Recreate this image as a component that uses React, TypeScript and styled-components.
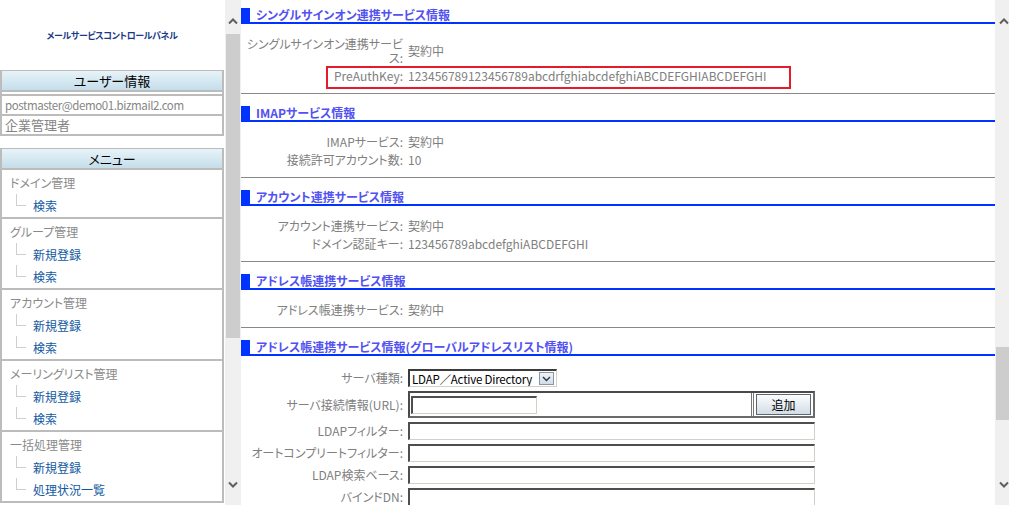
import styled, { createGlobalStyle } from 'styled-components';

const GlobalStyle = createGlobalStyle`
	html,
	body {
		margin: 0;
		padding: 0;
		background: #fff;
		overflow: hidden;
	}
	body {
		font-family: 'Noto Sans CJK JP', 'Noto Sans', sans-serif;
		font-size: 12px;
		font-feature-settings: 'palt';
		color: #808080;
	}
	* {
		box-sizing: border-box;
	}
`;

const Frames = styled.div`
	display: flex;
	width: 1012px;
	height: 505px;
`;

/* ---------- scrollbars ---------- */

const ScrollTrack = styled.div<{ $width: number }>`
	display: flex;
	flex-direction: column;
	flex-shrink: 0;
	width: ${({ $width }) => $width}px;
	height: 100%;
	background: #f0f0f0;
`;

const ScrollArrow = styled.div<{ $down?: boolean }>`
	display: flex;
	align-items: center;
	justify-content: center;
	height: 33px;
	padding: ${({ $down }) => ($down ? '0 0 9px' : '9px 0 0')};
	svg {
		display: block;
	}
`;

const ScrollThumb = styled.div<{ $top: number; $height: number }>`
	margin: ${({ $top }) => $top}px 1px 0;
	height: ${({ $height }) => $height}px;
	background: #cdcdcd;
`;

const ScrollRest = styled.div`
	flex: 1;
`;

const Chevron = ({ down }: { down?: boolean }) => (
	<svg width="10" height="7" viewBox="0 0 10 7">
		<polyline
			points={down ? '1,1.5 5,5.5 9,1.5' : '1,5.5 5,1.5 9,5.5'}
			fill="none"
			stroke="#5f5f5f"
			strokeWidth="2"
		/>
	</svg>
);

const Scrollbar = ({ width, top, height }: { width: number; top: number; height: number }) => (
	<ScrollTrack $width={width}>
		<ScrollArrow>
			<Chevron />
		</ScrollArrow>
		<ScrollThumb $top={top} $height={height} />
		<ScrollRest />
		<ScrollArrow $down>
			<Chevron down />
		</ScrollArrow>
	</ScrollTrack>
);

/* ---------- side frame ---------- */

const SideFrame = styled.div`
	display: flex;
	flex-shrink: 0;
	width: 241px;
`;

const SideContent = styled.div`
	width: 225px;
	padding-right: 1px;
`;

const Logo = styled.div`
	display: flex;
	align-items: center;
	justify-content: center;
	height: 70px;
	font-size: 9px;
	font-weight: 700;
	color: #1b3b85;
	letter-spacing: -0.4px;
`;

const SideBox = styled.div`
	border: 2px solid #bcbcbc;
	border-top-width: 1px;
	border-bottom: none;
	& + & {
		margin-top: 12px;
	}
`;

const BoxHeader = styled.div`
	height: 21px;
	line-height: 19px;
	text-align: center;
	font-size: 13px;
	color: #000;
	background: linear-gradient(#e8f3f8, #c4deea);
	border-bottom: 2px solid #bcbcbc;
`;

const UserRows = styled.div`
	margin-top: 2px;
	border-bottom: 2px solid #bcbcbc;
`;

const UserRow = styled.div<{ $large?: boolean }>`
	height: 20px;
	padding-left: 3px;
	border-top: 2px solid #bcbcbc;
	font-size: ${({ $large }) => ($large ? '13px' : '11.5px')};
	letter-spacing: ${({ $large }) => ($large ? '0' : '-0.4px')};
	line-height: 18px;
	color: #858585;
	white-space: nowrap;
`;

const MenuGroup = styled.div`
	padding: 2px 0 1px;
	border-bottom: 2px solid #bcbcbc;
`;

const MenuHeading = styled.div`
	height: 22px;
	padding-left: 8px;
	line-height: 22px;
	color: #8a8a8a;
`;

const MenuItem = styled.div`
	display: flex;
	align-items: center;
	height: 22px;
	padding-left: 14px;
	&::before {
		content: '';
		align-self: flex-start;
		width: 9px;
		height: 11px;
		margin-right: 7px;
		border-left: 1px solid #cfcfcf;
		border-bottom: 1px solid #cfcfcf;
	}
	a {
		color: #11599f;
		text-decoration: none;
	}
`;

/* ---------- main frame ---------- */

const Main = styled.main`
	flex: 1;
	min-width: 0;
	padding-top: 8px;
`;

const Section = styled.section<{ $first?: boolean }>`
	padding: ${({ $first }) => ($first ? '0' : '12px')} 0 8px;
	border-bottom: 1px solid #888;
`;

const SectionTitle = styled.h2`
	display: flex;
	height: 16px;
	margin: 0 0 11px;
	border-bottom: 2px solid #0033ff;
	font-size: 12px;
	font-weight: 700;
	line-height: 14px;
	color: #5252f2;
	white-space: nowrap;
	&::before {
		content: '';
		width: 9px;
		margin-right: 6px;
		background: #0033ff;
	}
`;

const Row = styled.div`
	position: relative;
	display: grid;
	grid-template-columns: 162px 1fr;
	column-gap: 5px;
	align-items: center;
	min-height: 18px;
	padding: 2px 0;
	line-height: 14px;
`;

const Label = styled.div`
	text-align: right;
`;

const Value = styled.div`
	white-space: nowrap;
`;

const Highlight = styled.div`
	position: absolute;
	left: 85px;
	top: -1px;
	width: 465px;
	height: 23px;
	border: 2px solid #e41b2b;
	pointer-events: none;
`;

const FormRow = styled(Row)`
	padding: 2px 0;
`;

const SelectBox = styled.div`
	display: flex;
	align-items: center;
	justify-content: space-between;
	width: 149px;
	height: 18px;
	padding: 0 2px;
	border-style: solid;
	border-width: 2px 1px 1px 2px;
	border-color: #3c3c3c #d4d0c8 #d4d0c8 #3c3c3c;
	font-size: 11.5px;
	letter-spacing: -0.2px;
	color: #000;
	white-space: nowrap;
	overflow: hidden;
	span.arrow {
		display: flex;
		flex-shrink: 0;
		align-items: center;
		justify-content: center;
		width: 15px;
		height: 13px;
		background: linear-gradient(#eef4f9, #cfdde9);
		border: 1px solid #8797a6;
	}
`;

const UrlGroup = styled.div`
	display: flex;
	width: 407px;
	height: 27px;
	border: 2px solid #4a4a4a;
	border-right-color: #6a6a6a;
	border-bottom-color: #6a6a6a;
`;

const UrlCell = styled.div`
	flex: 1;
	display: flex;
	align-items: center;
	padding-left: 1px;
`;

const ButtonCell = styled.div`
	display: flex;
	align-items: center;
	padding: 0 2px;
	border-left: 3px double #777;
`;

const Button = styled.button`
	width: 55px;
	height: 21px;
	padding: 0;
	border: 1px solid #5e6770;
	background: linear-gradient(#fbfdfe, #d2dde6);
	font-family: 'Noto Sans CJK JP', sans-serif;
	font-size: 12px;
	color: #000;
`;

const TextInput = styled.input<{ $width?: number }>`
	display: block;
	width: ${({ $width }) => $width ?? 407}px;
	height: 18px;
	margin: 0;
	padding: 0 2px;
	border-style: solid;
	border-width: 2px 1px 1px 2px;
	border-color: #4e4e4e #d4d0c8 #d4d0c8 #4e4e4e;
	background: #fff;
	outline: none;
`;

const menu = [
	{ title: 'ドメイン管理', items: ['検索'] },
	{ title: 'グループ管理', items: ['新規登録', '検索'] },
	{ title: 'アカウント管理', items: ['新規登録', '検索'] },
	{ title: 'メーリングリスト管理', items: ['新規登録', '検索'] },
	{ title: '一括処理管理', items: ['新規登録', '処理状況一覧'] },
];

const App = () => {
	return (
		<>
			<GlobalStyle />
			<Frames>
				<SideFrame>
					<SideContent>
						<Logo>メールサービスコントロールパネル</Logo>
						<SideBox>
							<BoxHeader>ユーザー情報</BoxHeader>
							<UserRows>
								<UserRow>postmaster@demo01.bizmail2.com</UserRow>
								<UserRow $large>企業管理者</UserRow>
							</UserRows>
						</SideBox>
						<SideBox>
							<BoxHeader>メニュー</BoxHeader>
							{menu.map((group) => (
								<MenuGroup key={group.title}>
									<MenuHeading>{group.title}</MenuHeading>
									{group.items.map((item) => (
										<MenuItem key={item}>
											<a href="#">{item}</a>
										</MenuItem>
									))}
								</MenuGroup>
							))}
						</SideBox>
					</SideContent>
					<Scrollbar width={16} top={1} height={304} />
				</SideFrame>

				<Main>
					<Section $first>
						<SectionTitle>シングルサインオン連携サービス情報</SectionTitle>
						<Row>
							<Label>シングルサインオン連携サービス:</Label>
							<Value>契約中</Value>
						</Row>
						<Row>
							<Label>PreAuthKey:</Label>
							<Value>123456789123456789abcdrfghiabcdefghiABCDEFGHIABCDEFGHI</Value>
							<Highlight />
						</Row>
					</Section>

					<Section>
						<SectionTitle>IMAPサービス情報</SectionTitle>
						<Row>
							<Label>IMAPサービス:</Label>
							<Value>契約中</Value>
						</Row>
						<Row>
							<Label>接続許可アカウント数:</Label>
							<Value>10</Value>
						</Row>
					</Section>

					<Section>
						<SectionTitle>アカウント連携サービス情報</SectionTitle>
						<Row>
							<Label>アカウント連携サービス:</Label>
							<Value>契約中</Value>
						</Row>
						<Row>
							<Label>ドメイン認証キー:</Label>
							<Value>123456789abcdefghiABCDEFGHI</Value>
						</Row>
					</Section>

					<Section>
						<SectionTitle>アドレス帳連携サービス情報</SectionTitle>
						<Row>
							<Label>アドレス帳連携サービス:</Label>
							<Value>契約中</Value>
						</Row>
					</Section>

					<Section>
						<SectionTitle>アドレス帳連携サービス情報(グローバルアドレスリスト情報)</SectionTitle>
						<FormRow>
							<Label>サーバ種類:</Label>
							<SelectBox>
								<span>LDAP／Active Directory</span>
								<span className="arrow">
									<svg width="9" height="6" viewBox="0 0 9 6">
										<polyline points="1,1 4.5,4.5 8,1" fill="none" stroke="#333" strokeWidth="1.4" />
									</svg>
								</span>
							</SelectBox>
						</FormRow>
						<FormRow>
							<Label>サーバ接続情報(URL):</Label>
							<UrlGroup>
								<UrlCell>
									<TextInput $width={126} />
								</UrlCell>
								<ButtonCell>
									<Button type="button">追加</Button>
								</ButtonCell>
							</UrlGroup>
						</FormRow>
						<FormRow>
							<Label>LDAPフィルター:</Label>
							<TextInput />
						</FormRow>
						<FormRow>
							<Label>オートコンプリートフィルター:</Label>
							<TextInput />
						</FormRow>
						<FormRow>
							<Label>LDAP検索ベース:</Label>
							<TextInput />
						</FormRow>
						<FormRow>
							<Label>バインドDN:</Label>
							<TextInput />
						</FormRow>
					</Section>
				</Main>

				<Scrollbar width={17} top={314} height={73} />
			</Frames>
		</>
	);
};

export default App;
